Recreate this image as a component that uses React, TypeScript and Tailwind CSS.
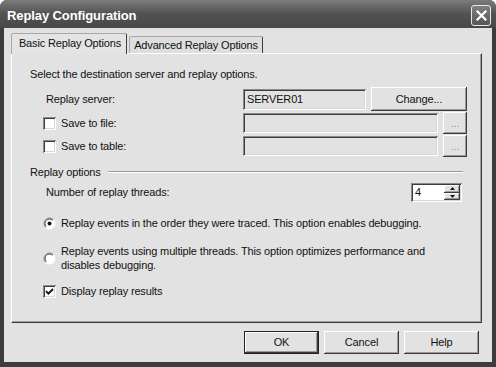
import type { ReactNode } from "react";

const raised =
  "shadow-[inset_-1px_-1px_0_#3c3c3c,inset_1px_1px_0_#ffffff,inset_-2px_-2px_0_#9a9a9a]";
const sunken =
  "shadow-[inset_1px_1px_0_#8a8a8a,inset_-1px_-1px_0_#ffffff,inset_2px_2px_0_#3c3c3c,inset_-2px_-2px_0_#d6d6d6]";

function Button({ children, className = "" }: { children: ReactNode; className?: string }) {
  return (
    <button
      type="button"
      className={`flex shrink-0 items-center justify-center bg-[#e2e2e2] text-[11px] text-[#111] ${raised} ${className}`}
    >
      {children}
    </button>
  );
}

function Checkbox({ checked = false }: { checked?: boolean }) {
  return (
    <span className={`flex h-[13px] w-[13px] shrink-0 items-center justify-center bg-white ${sunken}`}>
      {checked && (
        <svg width="9" height="9" viewBox="0 0 9 9">
          <path d="M1 4.2 L3.4 6.6 L8 2" fill="none" stroke="#111" strokeWidth="1.9" />
        </svg>
      )}
    </span>
  );
}

function Radio({ checked = false }: { checked?: boolean }) {
  return (
    <svg width="13" height="13" viewBox="0 0 13 13" className="shrink-0">
      <circle cx="6.5" cy="6.5" r="5.5" fill="#ffffff" />
      <path d="M10.4 2.6 A5.5 5.5 0 0 0 2.6 10.4" fill="none" stroke="#8a8a8a" strokeWidth="1" />
      <path d="M9.7 3.3 A4.5 4.5 0 0 0 3.3 9.7" fill="none" stroke="#3c3c3c" strokeWidth="1" />
      <path d="M10.4 2.6 A5.5 5.5 0 0 1 2.6 10.4" fill="none" stroke="#ffffff" strokeWidth="1" />
      {checked && <circle cx="6.5" cy="6.5" r="2" fill="#111" />}
    </svg>
  );
}

function TextBox({ value, className = "" }: { value?: string; className?: string }) {
  return (
    <div className={`flex shrink-0 items-center bg-[#e2e2e2] pl-[4px] text-[11px] text-[#111] ${sunken} ${className}`}>
      {value}
    </div>
  );
}

function Spinner() {
  return (
    <div className={`flex h-[19px] w-[51px] items-center justify-between bg-white pl-[4px] pr-[2px] text-[11px] text-[#111] ${sunken}`}>
      <span>4</span>
      <div className="flex h-[15px] w-[16px] flex-col">
        <div className={`flex flex-1 items-center justify-center bg-[#e2e2e2] ${raised}`}>
          <svg width="5" height="3" viewBox="0 0 5 3">
            <path d="M0 3 L2.5 0 L5 3 Z" fill="#111" />
          </svg>
        </div>
        <div className={`flex flex-1 items-center justify-center bg-[#e2e2e2] ${raised}`}>
          <svg width="5" height="3" viewBox="0 0 5 3">
            <path d="M0 0 L2.5 3 L5 0 Z" fill="#111" />
          </svg>
        </div>
      </div>
    </div>
  );
}

export default function App() {
  return (
    <div className="h-[367px] w-[496px] bg-white font-['Liberation_Sans',Arial,sans-serif]">
      <div className="flex h-full w-full flex-col rounded-t-[7px] bg-[#3c3c3c]">
        {/* title bar */}
        <div className="flex h-[28px] shrink-0 items-start justify-between rounded-t-[7px] bg-gradient-to-b from-[#7c7c7c] via-[#525252] to-[#484848] pl-[7px] pr-[5px]">
          <span className="mt-[8px] text-[13px] leading-[16px] font-bold tracking-[-0.1px] text-white">Replay Configuration</span>
          <button
            type="button"
            className="mt-[5px] flex h-[21px] w-[20px] items-center justify-center rounded-[3px] border border-[#e8e8e8] bg-gradient-to-b from-[#808080] to-[#565656]"
          >
            <svg width="11" height="11" viewBox="0 0 11 11">
              <path d="M1.5 1.5 L9.5 9.5 M9.5 1.5 L1.5 9.5" stroke="#ffffff" strokeWidth="2.2" strokeLinecap="square" />
            </svg>
          </button>
        </div>

        <div className="mx-[4px] mb-[5px] flex flex-1 flex-col bg-[#e2e2e2] pl-[7px] pt-[5px] text-[11px] tracking-[-0.15px] text-[#111]">
          {/* tabs */}
          <div className="flex h-[20px] items-end">
            <div className="relative z-10 -mb-px flex h-[21px] w-[116px] items-center justify-center rounded-t-[2px] border-l border-t border-r border-l-[#a8a8a8] border-t-[#a8a8a8] border-r-[#3c3c3c] bg-[#e4e4e4] pb-[2px] pl-[2px]">
              Basic Replay Options
            </div>
            <div className="ml-[2px] flex h-[17px] w-[134px] items-center justify-center rounded-t-[2px] border-l border-t border-r border-l-[#a8a8a8] border-t-[#a8a8a8] border-r-[#3c3c3c] bg-[#dedede]">
              Advanced Replay Options
            </div>
          </div>

          {/* panel */}
          <div className="flex h-[270px] w-[471px] flex-col border-l border-t border-r border-b border-l-white border-t-white border-r-[#3c3c3c] border-b-[#3c3c3c] pl-[18px] shadow-[inset_-1px_-1px_0_#a0a0a0]">
            <div className="mt-[13px] flex h-[14px] items-center">Select the destination server and replay options.</div>

            <div className="mt-[6px] flex h-[24px] items-center">
              <span className="w-[213px] shrink-0 pl-[16px]">Replay server:</span>
              <TextBox value="SERVER01" className="h-[21px] w-[123px]" />
              <Button className="ml-[5px] h-[24px] w-[96px]">Change...</Button>
            </div>

            <div className="mt-[1px] flex h-[22px] items-center">
              <span className="flex w-[213px] shrink-0 items-center gap-[5px] pl-[13px]">
                <Checkbox />
                Save to file:
              </span>
              <TextBox className="h-[20px] w-[195px]" />
              <Button className="ml-[5px] h-[22px] w-[24px] text-[#a0a0a0]">...</Button>
            </div>

            <div className="mt-[1px] flex h-[22px] items-center">
              <span className="flex w-[213px] shrink-0 items-center gap-[5px] pl-[13px]">
                <Checkbox />
                Save to table:
              </span>
              <TextBox className="h-[20px] w-[195px]" />
              <Button className="ml-[5px] h-[22px] w-[24px] text-[#a0a0a0]">...</Button>
            </div>

            <div className="mt-[8px] flex h-[14px] w-[433px] items-center">
              <span>Replay options</span>
              <div className="ml-[7px] h-[2px] flex-1 border-t border-b border-t-[#9a9a9a] border-b-white" />
            </div>

            <div className="mt-[4px] flex h-[19px] w-[432px] items-center justify-between pl-[16px]">
              <span>Number of replay threads:</span>
              <Spinner />
            </div>

            <div className="mt-[14px] flex h-[14px] items-center gap-[5px] pl-[13px]">
              <Radio checked />
              <span>Replay events in the order they were traced. This option enables debugging.</span>
            </div>

            <div className="mt-[14px] flex items-center gap-[5px] pl-[13px]">
              <Radio />
              <span className="leading-[14px]">
                Replay events using multiple threads. This option optimizes performance and
                <br />
                disables debugging.
              </span>
            </div>

            <div className="mt-[12px] flex h-[14px] items-center gap-[5px] pl-[13px]">
              <Checkbox checked />
              <span>Display replay results</span>
            </div>
          </div>

          {/* dialog buttons */}
          <div className="mt-[8px] flex justify-end gap-[5px] pr-[13px]">
            <Button className="h-[23px] w-[75px] border border-[#222]">OK</Button>
            <Button className="h-[23px] w-[75px]">Cancel</Button>
            <Button className="h-[23px] w-[75px]">Help</Button>
          </div>
        </div>
      </div>
    </div>
  );
}
